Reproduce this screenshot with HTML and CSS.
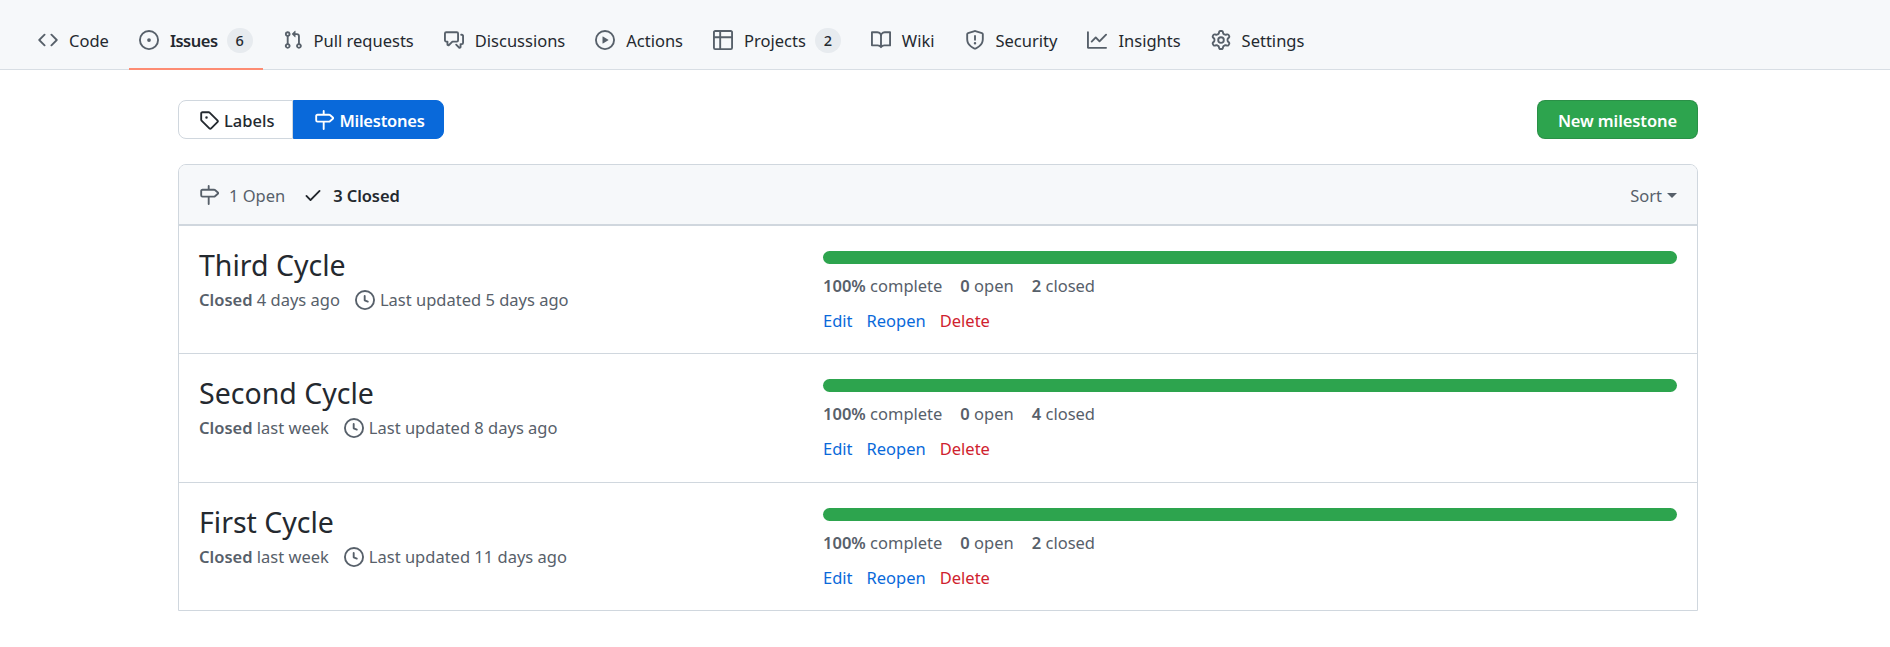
FILE: index.html
```html
<!DOCTYPE html>
<html lang="en">
<head>
  <meta charset="UTF-8" />
  <title>Milestones</title>
  <link rel="stylesheet" href="styles.css">
</head>
<body>
  <svg class="sprite" xmlns="http://www.w3.org/2000/svg">
    <symbol id="i-code" viewBox="0 0 16 16"><path fill-rule="evenodd" d="M4.72 3.22a.75.75 0 011.06 1.06L2.06 8l3.72 3.72a.75.75 0 11-1.06 1.06L.47 8.53a.75.75 0 010-1.06l4.25-4.25zm6.56 0a.75.75 0 10-1.06 1.06L13.94 8l-3.72 3.72a.75.75 0 101.06 1.06l4.25-4.25a.75.75 0 000-1.06l-4.25-4.25z"/></symbol>
    <symbol id="i-issue" viewBox="0 0 16 16"><path d="M8 9.5a1.5 1.5 0 100-3 1.5 1.5 0 000 3z"/><path fill-rule="evenodd" d="M8 0a8 8 0 100 16A8 8 0 008 0zM1.5 8a6.5 6.5 0 1113 0 6.5 6.5 0 01-13 0z"/></symbol>
    <symbol id="i-pull" viewBox="0 0 16 16"><path fill-rule="evenodd" d="M7.177 3.073L9.573.677A.25.25 0 0110 .854v4.792a.25.25 0 01-.427.177L7.177 3.427a.25.25 0 010-.354zM3.75 2.5a.75.75 0 100 1.5.75.75 0 000-1.5zm-2.25.75a2.25 2.25 0 113 2.122v5.256a2.251 2.251 0 11-1.5 0V5.372A2.25 2.25 0 011.5 3.25zM11 2.5h-1V4h1a1 1 0 011 1v5.628a2.251 2.251 0 101.5 0V5A2.5 2.5 0 0011 2.5zm1 10.25a.75.75 0 111.5 0 .75.75 0 01-1.5 0zM3.75 12a.75.75 0 100 1.5.75.75 0 000-1.5z"/></symbol>
    <symbol id="i-discuss" viewBox="0 0 16 16"><path fill-rule="evenodd" d="M1.5 2.75a.25.25 0 01.25-.25h8.5a.25.25 0 01.25.25v5.5a.25.25 0 01-.25.25h-3.5a.75.75 0 00-.53.22L3.5 11.44V9.25a.75.75 0 00-.75-.75h-1a.25.25 0 01-.25-.25v-5.5zM1.75 1A1.75 1.75 0 000 2.75v5.5C0 9.216.784 10 1.75 10H2v1.543a1.457 1.457 0 002.487 1.03L7.061 10h3.189A1.75 1.75 0 0012 8.25v-5.5A1.75 1.75 0 0010.25 1h-8.5zM14.5 4.75a.25.25 0 00-.25-.25h-.5a.75.75 0 110-1.5h.5c.966 0 1.75.784 1.75 1.75v5.5A1.75 1.75 0 0114.25 12H14v1.543a1.457 1.457 0 01-2.487 1.03L9.22 12.28a.75.75 0 111.06-1.06l2.22 2.22v-2.19a.75.75 0 01.75-.75h1a.25.25 0 00.25-.25v-5.5z"/></symbol>
    <symbol id="i-play" viewBox="0 0 16 16"><path fill-rule="evenodd" d="M1.5 8a6.5 6.5 0 1113 0 6.5 6.5 0 01-13 0zM8 0a8 8 0 100 16A8 8 0 008 0zM6.379 5.227A.25.25 0 006 5.442v5.117a.25.25 0 00.379.214l4.264-2.559a.25.25 0 000-.428L6.379 5.227z"/></symbol>
    <symbol id="i-table" viewBox="0 0 16 16"><path fill-rule="evenodd" d="M0 1.75C0 .784.784 0 1.75 0h12.5C15.216 0 16 .784 16 1.75v12.5A1.75 1.75 0 0114.25 16H1.75A1.75 1.75 0 010 14.25V1.75zM1.5 6.5v7.75c0 .138.112.25.25.25H5v-8H1.5zM5 5H1.5V1.75a.25.25 0 01.25-.25H5V5zm1.5 1.5v8h7.75a.25.25 0 00.25-.25V6.5h-8zm8-1.5h-8V1.5h7.75a.25.25 0 01.25.25V5z"/></symbol>
    <symbol id="i-book" viewBox="0 0 16 16"><path fill-rule="evenodd" d="M0 1.75A.75.75 0 01.75 1h4.253c1.227 0 2.317.59 3 1.501A3.744 3.744 0 0111.006 1h4.245a.75.75 0 01.75.75v10.5a.75.75 0 01-.75.75h-4.507a2.25 2.25 0 00-1.591.659l-.622.621a.75.75 0 01-1.06 0l-.622-.621A2.25 2.25 0 005.258 13H.75a.75.75 0 01-.75-.75V1.75zm8.755 3a2.25 2.25 0 012.25-2.25H14.5v9h-3.757c-.71 0-1.4.201-1.992.572l.004-7.322zm-1.504 7.324l.004-5.073-.002-2.253A2.25 2.25 0 005.003 2.5H1.5v9h3.757a3.75 3.75 0 011.994.574z"/></symbol>
    <symbol id="i-shield" viewBox="0 0 16 16"><path fill-rule="evenodd" d="M7.467.133a1.75 1.75 0 011.066 0l5.25 1.68A1.75 1.75 0 0115 3.48V7c0 1.566-.32 3.182-1.303 4.682-.983 1.498-2.585 2.813-5.032 3.855a1.7 1.7 0 01-1.33 0c-2.447-1.042-4.049-2.357-5.032-3.855C1.32 10.182 1 8.566 1 7V3.48a1.75 1.75 0 011.217-1.667l5.25-1.68zm.61 1.429a.25.25 0 00-.153 0l-5.25 1.68a.25.25 0 00-.174.238V7c0 1.358.275 2.666 1.057 3.86.784 1.194 2.121 2.34 4.366 3.297a.2.2 0 00.154 0c2.245-.956 3.582-2.104 4.366-3.298C13.225 9.666 13.5 8.36 13.5 7V3.48a.25.25 0 00-.174-.237l-5.25-1.68zM9 10.5a1 1 0 11-2 0 1 1 0 012 0zm-.25-5.75a.75.75 0 10-1.5 0v3a.75.75 0 001.5 0v-3z"/></symbol>
    <symbol id="i-graph" viewBox="0 0 16 16"><path fill-rule="evenodd" d="M1.5 1.75a.75.75 0 00-1.5 0v12.5c0 .414.336.75.75.75h14.5a.75.75 0 000-1.5H1.5V1.75zm14.28 2.53a.75.75 0 00-1.06-1.06L10 7.94 7.53 5.47a.75.75 0 00-1.06 0L3.22 8.72a.75.75 0 001.06 1.06L7 7.06l2.47 2.47a.75.75 0 001.06 0l5.25-5.25z"/></symbol>
    <symbol id="i-gear" viewBox="0 0 16 16"><path fill-rule="evenodd" d="M7.429 1.525a6.593 6.593 0 011.142 0c.036.003.108.036.137.146l.289 1.105c.147.56.55.967.997 1.189.174.086.341.183.501.29.417.278.97.423 1.53.27l1.102-.303c.11-.03.175.016.195.046.219.31.41.641.573.989.014.031.022.11-.059.19l-.815.806c-.411.406-.562.957-.53 1.456a4.588 4.588 0 010 .582c-.032.499.119 1.05.53 1.456l.815.806c.08.08.073.159.059.19a6.494 6.494 0 01-.573.99c-.02.029-.086.074-.195.045l-1.103-.303c-.559-.153-1.112-.008-1.529.27-.16.107-.327.204-.5.29-.449.222-.851.628-.998 1.189l-.289 1.105c-.029.11-.101.143-.137.146a6.613 6.613 0 01-1.142 0c-.036-.003-.108-.037-.137-.146l-.289-1.105c-.147-.56-.55-.967-.997-1.189a4.502 4.502 0 01-.501-.29c-.417-.278-.97-.423-1.53-.27l-1.102.303c-.11.03-.175-.016-.195-.046a6.492 6.492 0 01-.573-.989c-.014-.031-.022-.11.059-.19l.815-.806c.411-.406.562-.957.53-1.456a4.587 4.587 0 010-.582c.032-.499-.119-1.05-.53-1.456l-.815-.806c-.08-.08-.073-.159-.059-.19a6.44 6.44 0 01.573-.99c.02-.029.086-.075.195-.045l1.103.303c.559.153 1.112.008 1.529-.27.16-.107.327-.204.5-.29.449-.222.851-.628.998-1.189l.289-1.105c.029-.11.101-.143.137-.146zM8 0c-.236 0-.47.01-.701.03-.743.065-1.29.615-1.458 1.261l-.29 1.106c-.017.066-.078.158-.211.224a5.994 5.994 0 00-.668.386c-.123.082-.233.09-.3.071L3.27 2.776c-.644-.177-1.392.02-1.82.63a7.977 7.977 0 00-.704 1.217c-.315.675-.111 1.422.363 1.891l.815.806c.05.048.098.147.088.294a6.084 6.084 0 000 .772c.01.147-.038.246-.088.294l-.815.806c-.474.469-.678 1.216-.363 1.891.2.428.436.835.704 1.218.428.609 1.176.806 1.82.63l1.103-.303c.066-.019.176-.011.299.071.213.143.436.272.668.386.133.066.194.158.212.224l.289 1.106c.169.646.715 1.196 1.458 1.26a8.094 8.094 0 001.402 0c.743-.064 1.29-.614 1.458-1.26l.29-1.106c.017-.066.078-.158.211-.224a5.98 5.98 0 00.668-.386c.123-.082.233-.09.3-.071l1.102.302c.644.177 1.392-.02 1.82-.63.268-.382.505-.789.704-1.217.315-.675.111-1.422-.364-1.891l-.814-.806c-.05-.048-.098-.147-.088-.294a6.1 6.1 0 000-.772c-.01-.147.039-.246.088-.294l.814-.806c.475-.469.679-1.216.364-1.891a7.992 7.992 0 00-.704-1.218c-.428-.609-1.176-.806-1.82-.63l-1.103.303c-.066.019-.176.011-.299-.071a5.991 5.991 0 00-.668-.386c-.133-.066-.194-.158-.212-.224L10.16 1.29C9.99.645 9.444.095 8.701.031A8.094 8.094 0 008 0zm1.5 8a1.5 1.5 0 11-3 0 1.5 1.5 0 013 0zM11 8a3 3 0 11-6 0 3 3 0 016 0z"/></symbol>
    <symbol id="i-tag" viewBox="0 0 16 16"><path fill-rule="evenodd" d="M2.5 7.775V2.75a.25.25 0 01.25-.25h5.025a.25.25 0 01.177.073l6.25 6.25a.25.25 0 010 .354l-5.025 5.025a.25.25 0 01-.354 0l-6.25-6.25a.25.25 0 01-.073-.177zm-1.5 0V2.75C1 1.784 1.784 1 2.75 1h5.025c.464 0 .91.184 1.238.513l6.25 6.25a1.75 1.75 0 010 2.474l-5.026 5.026a1.75 1.75 0 01-2.474 0l-6.25-6.25A1.75 1.75 0 011 7.775zM6 5a1 1 0 100 2 1 1 0 000-2z"/></symbol>
    <symbol id="i-milestone" viewBox="0 0 16 16"><path fill-rule="evenodd" d="M7.75 0a.75.75 0 01.75.75V3h3.634c.414 0 .814.147 1.13.414l2.07 1.75a1.75 1.75 0 010 2.672l-2.07 1.75a1.75 1.75 0 01-1.13.414H8.5v5.25a.75.75 0 11-1.5 0V10H2.75A1.75 1.75 0 011 8.25v-3.5C1 3.784 1.784 3 2.75 3H7V.75A.75.75 0 017.75 0zm0 8.5h4.384a.25.25 0 00.161-.06l2.07-1.75a.25.25 0 000-.38l-2.07-1.75a.25.25 0 00-.161-.06H2.75a.25.25 0 00-.25.25v3.5c0 .138.112.25.25.25h5z"/></symbol>
    <symbol id="i-check" viewBox="0 0 16 16"><path fill-rule="evenodd" d="M13.78 4.22a.75.75 0 010 1.06l-7.25 7.25a.75.75 0 01-1.06 0L2.22 9.28a.75.75 0 011.06-1.06L6 10.94l6.72-6.72a.75.75 0 011.06 0z"/></symbol>
    <symbol id="i-clock" viewBox="0 0 16 16"><path fill-rule="evenodd" d="M1.5 8a6.5 6.5 0 1113 0 6.5 6.5 0 01-13 0zM8 0a8 8 0 100 16A8 8 0 008 0zm.5 4.75a.75.75 0 00-1.5 0v3.5a.75.75 0 00.471.696l2.5 1a.75.75 0 00.557-1.392L8.5 7.742V4.75z"/></symbol>
  </svg>

  <nav class="repo-nav">
    <a class="tab"><svg class="icon"><use href="#i-code"/></svg>Code</a>
    <a class="tab selected"><svg class="icon"><use href="#i-issue"/></svg>Issues<span class="counter">6</span></a>
    <a class="tab"><svg class="icon"><use href="#i-pull"/></svg>Pull requests</a>
    <a class="tab"><svg class="icon"><use href="#i-discuss"/></svg>Discussions</a>
    <a class="tab"><svg class="icon"><use href="#i-play"/></svg>Actions</a>
    <a class="tab"><svg class="icon"><use href="#i-table"/></svg>Projects<span class="counter">2</span></a>
    <a class="tab"><svg class="icon"><use href="#i-book"/></svg>Wiki</a>
    <a class="tab"><svg class="icon"><use href="#i-shield"/></svg>Security</a>
    <a class="tab"><svg class="icon"><use href="#i-graph"/></svg>Insights</a>
    <a class="tab"><svg class="icon"><use href="#i-gear"/></svg>Settings</a>
  </nav>

  <main class="container">
    <div class="toolbar">
      <div class="subnav">
        <a class="subnav-item"><svg class="icon"><use href="#i-tag"/></svg>Labels</a>
        <a class="subnav-item selected"><svg class="icon"><use href="#i-milestone"/></svg>Milestones</a>
      </div>
      <a class="btn-new">New milestone</a>
    </div>

    <section class="box">
      <header class="box-header">
        <a class="state"><svg class="icon"><use href="#i-milestone"/></svg>1 Open</a>
        <a class="state active"><svg class="icon"><use href="#i-check"/></svg>3 Closed</a>
        <a class="sort">Sort<span class="caret"></span></a>
      </header>

      <article class="milestone">
        <div class="info">
          <h2>Third Cycle</h2>
          <div class="meta"><span><b>Closed</b> 4 days ago</span><span class="updated"><svg class="icon"><use href="#i-clock"/></svg>Last updated 5 days ago</span></div>
        </div>
        <div class="progress-col">
          <div class="bar"></div>
          <div class="stats"><span><b>100%</b> complete</span><span><b>0</b> open</span><span><b>2</b> closed</span></div>
          <div class="actions"><a>Edit</a><a>Reopen</a><a class="danger">Delete</a></div>
        </div>
      </article>

      <article class="milestone">
        <div class="info">
          <h2>Second Cycle</h2>
          <div class="meta"><span><b>Closed</b> last week</span><span class="updated"><svg class="icon"><use href="#i-clock"/></svg>Last updated 8 days ago</span></div>
        </div>
        <div class="progress-col">
          <div class="bar"></div>
          <div class="stats"><span><b>100%</b> complete</span><span><b>0</b> open</span><span><b>4</b> closed</span></div>
          <div class="actions"><a>Edit</a><a>Reopen</a><a class="danger">Delete</a></div>
        </div>
      </article>

      <article class="milestone">
        <div class="info">
          <h2>First Cycle</h2>
          <div class="meta"><span><b>Closed</b> last week</span><span class="updated"><svg class="icon"><use href="#i-clock"/></svg>Last updated 11 days ago</span></div>
        </div>
        <div class="progress-col">
          <div class="bar"></div>
          <div class="stats"><span><b>100%</b> complete</span><span><b>0</b> open</span><span><b>2</b> closed</span></div>
          <div class="actions"><a>Edit</a><a>Reopen</a><a class="danger">Delete</a></div>
        </div>
      </article>
    </section>
  </main>
</body>
</html>
```

FILE: styles.css
```css
:root {
  --text: #24292f;
  --muted: #57606a;
  --border: #d0d7de;
  --blue: #0969da;
  --green: #2da44e;
  --red: #cf222e;
  --canvas: #f6f8fa;
}
* { box-sizing: border-box; }
body {
  margin: 0;
  background: #fff;
  color: var(--text);
  font-family: "Noto Sans", sans-serif;
  font-size: 16.5px;
}
.sprite { display: none; }
.icon { width: 20px; height: 20px; fill: currentColor; flex: none; }

/* repo tabs */
.repo-nav {
  display: flex;
  align-items: flex-start;
  height: 70px;
  padding: 20px 0 0 28px;
  background: var(--canvas);
  border-bottom: 1px solid #d8dee4;
}
.tab {
  display: flex;
  align-items: center;
  gap: 11px;
  height: 50px;
  margin-bottom: -1px;
  padding: 0 10px 10px;
  margin-right: 10px;
  color: var(--text);
  white-space: nowrap;
}
.tab .icon { color: var(--muted); }
.tab.selected {
  font-weight: 600;
  letter-spacing: -0.5px;
  border-bottom: 2px solid #fd8c73;
  padding-bottom: 8px;
}
.counter {
  display: flex;
  align-items: center;
  justify-content: center;
  width: 26px;
  height: 25px;
  margin-left: -2px;
  border-radius: 13px;
  background: rgba(175,184,193,0.2);
  font-size: 14.5px;
  font-weight: 500;
  letter-spacing: 0;
}

.container { width: 1520px; margin: 30px 0 0 178px; }
.toolbar { display: flex; justify-content: space-between; }
.subnav { display: flex; }
.subnav-item {
  display: flex;
  align-items: center;
  gap: 5px;
  height: 39px;
  padding: 1px 18px 0 20px;
  border: 1px solid var(--border);
  border-radius: 8px 0 0 8px;
  font-weight: 500;
  color: var(--text);
}
.subnav-item.selected {
  color: #fff;
  background: var(--blue);
  border-color: var(--blue);
  border-radius: 0 8px 8px 0;
  font-weight: 600;
  letter-spacing: -0.25px;
}
.btn-new {
  display: flex;
  align-items: center;
  height: 39px;
  padding: 1px 20px 0;
  background: var(--green);
  border: 1px solid rgba(27,31,36,0.15);
  border-radius: 8px;
  color: #fff;
  font-weight: 600;
  letter-spacing: -0.1px;
}

.box {
  margin-top: 25px;
  border: 1px solid var(--border);
  border-radius: 8px 8px 0 0;
  overflow: hidden;
}
.box-header {
  display: flex;
  align-items: center;
  gap: 18px;
  height: 61px;
  padding: 1px 20px 0;
  background: var(--canvas);
  border-bottom: 2px solid var(--border);
}
.state { display: flex; align-items: center; gap: 10px; color: var(--muted); }
.state.active { color: var(--text); font-weight: 600; letter-spacing: -0.1px; }
.sort { margin-left: auto; display: flex; align-items: center; gap: 5px; color: var(--muted); }
.caret {
  border-top: 5px solid var(--muted);
  border-left: 5px solid transparent;
  border-right: 5px solid transparent;
}

.milestone {
  display: flex;
  height: 128.5px;
  padding: 25px 20px 0;
  border-top: 1px solid var(--border);
}
.box-header + .milestone { height: 127px; border-top: 0; }
.info { width: 624px; flex: none; }
.info h2 {
  margin: -6px 0 3px;
  font-size: 28.5px;
  font-weight: 400;
  line-height: 40px;
  color: var(--text);
}
.meta { display: flex; gap: 15px; color: var(--muted); line-height: 24px; }
.meta b, .stats b { font-weight: 600; }
.updated { display: flex; align-items: center; gap: 5px; }
.progress-col { flex: 1; }
.bar { height: 13px; border-radius: 7px; background: var(--green); }
.stats { display: flex; gap: 18px; margin-top: 10px; color: var(--muted); line-height: 24px; }
.actions { display: flex; gap: 14px; margin-top: 11px; line-height: 24px; color: var(--blue); }
.actions .danger { color: var(--red); }
```
